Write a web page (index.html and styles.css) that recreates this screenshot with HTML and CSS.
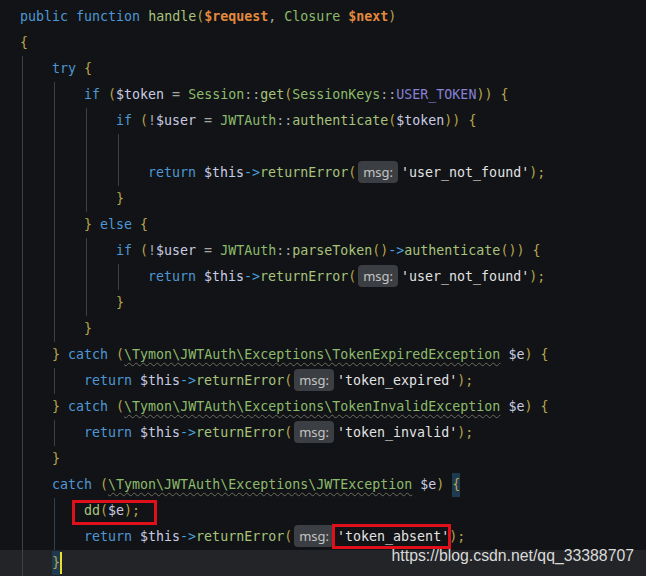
FILE: index.html
```html
<!DOCTYPE html>
<html lang="en">

<head>
  <meta charset="UTF-8">
  <meta name="viewport" content="width=device-width, initial-scale=1.0">
  <title>handle</title>
  <link rel="stylesheet" href="styles.css">
</head>

<body>
  <div class="editor">
    <div class="line"><span class="k">public</span> <span class="k">function</span> <span class="f">handle</span><span class="b">(</span><span class="p">$request</span><span class="o">, </span><span class="c">Closure</span> <span class="p">$next</span><span class="b">)</span></div>
    <div class="line"><span class="b">{</span></div>
    <div class="line"><span class="in g"></span><span class="k">try</span> <span class="b">{</span></div>
    <div class="line"><span class="in g"></span><span class="in g"></span><span class="k">if</span> <span class="b">(</span><span class="v">$token</span> <span class="o">=</span> <span class="c">Session</span><span class="o">::</span><span class="f">get</span><span class="b">(</span><span class="c">SessionKeys</span><span class="o">::</span><span class="n">USER_TOKEN</span><span class="b">))</span> <span class="b">{</span></div>
    <div class="line"><span class="in g"></span><span class="in g"></span><span class="in g"></span><span class="k">if</span> <span class="b">(</span><span class="o">!</span><span class="v">$user</span> <span class="o">=</span> <span class="c">JWTAuth</span><span class="o">::</span><span class="f">authenticate</span><span class="b">(</span><span class="v">$token</span><span class="b">))</span> <span class="b">{</span></div>
    <div class="line"><span class="in g"></span><span class="in g"></span><span class="in g"></span><span class="in g"></span></div>
    <div class="line"><span class="in g"></span><span class="in g"></span><span class="in g"></span><span class="in g"></span><span class="k">return</span> <span class="v">$this</span><span class="a">-&gt;</span><span class="f">returnError</span><span class="b">(</span><span class="hint">msg:</span><span class="s">'user_not_found'</span><span class="b">);</span></div>
    <div class="line"><span class="in g"></span><span class="in g"></span><span class="in g"></span><span class="b">}</span></div>
    <div class="line"><span class="in g"></span><span class="in g"></span><span class="b">}</span> <span class="k">else</span> <span class="b">{</span></div>
    <div class="line"><span class="in g"></span><span class="in g"></span><span class="in g"></span><span class="k">if</span> <span class="b">(</span><span class="o">!</span><span class="v">$user</span> <span class="o">=</span> <span class="c">JWTAuth</span><span class="o">::</span><span class="f">parseToken</span><span class="b">()</span><span class="a">-&gt;</span><span class="f">authenticate</span><span class="b">())</span> <span class="b">{</span></div>
    <div class="line"><span class="in g"></span><span class="in g"></span><span class="in g"></span><span class="in g"></span><span class="k">return</span> <span class="v">$this</span><span class="a">-&gt;</span><span class="f">returnError</span><span class="b">(</span><span class="hint">msg:</span><span class="s">'user_not_found'</span><span class="b">);</span></div>
    <div class="line"><span class="in g"></span><span class="in g"></span><span class="in g"></span><span class="b">}</span></div>
    <div class="line"><span class="in g"></span><span class="in g"></span><span class="b">}</span></div>
    <div class="line"><span class="in g"></span><span class="b">}</span> <span class="k">catch</span> <span class="b">(</span><span class="c wavy">\Tymon\JWTAuth\Exceptions\TokenExpiredException</span> <span class="v">$e</span><span class="b">)</span> <span class="b">{</span></div>
    <div class="line"><span class="in g"></span><span class="in g"></span><span class="k">return</span> <span class="v">$this</span><span class="a">-&gt;</span><span class="f">returnError</span><span class="b">(</span><span class="hint">msg:</span><span class="s">'token_expired'</span><span class="b">);</span></div>
    <div class="line"><span class="in g"></span><span class="b">}</span> <span class="k">catch</span> <span class="b">(</span><span class="c wavy">\Tymon\JWTAuth\Exceptions\TokenInvalidException</span> <span class="v">$e</span><span class="b">)</span> <span class="b">{</span></div>
    <div class="line"><span class="in g"></span><span class="in g"></span><span class="k">return</span> <span class="v">$this</span><span class="a">-&gt;</span><span class="f">returnError</span><span class="b">(</span><span class="hint">msg:</span><span class="s">'token_invalid'</span><span class="b">);</span></div>
    <div class="line"><span class="in g"></span><span class="b">}</span></div>
    <div class="line"><span class="in g"></span><span class="k">catch</span> <span class="b">(</span><span class="c wavy">\Tymon\JWTAuth\Exceptions\JWTException</span> <span class="v">$e</span><span class="b">)</span> <span class="b match">{</span></div>
    <div class="line"><span class="in g"></span><span class="in ga"></span><span class="mark mark-dd"><span class="f">dd</span><span class="b">(</span><span class="v">$e</span><span class="b">);</span></span></div>
    <div class="line"><span class="in g"></span><span class="in ga"></span><span class="k">return</span> <span class="v">$this</span><span class="a">-&gt;</span><span class="f">returnError</span><span class="b">(</span><span class="hint">msg:</span><span class="mark mark-str"><span class="s">'token_absent'</span></span><span class="b">);</span></div>
    <div class="line current"><span class="in g"></span><span class="b match">}</span><span class="cursor"></span></div>

    <div class="watermark">https://blog.csdn.net/qq_33388707</div>
  </div>
</body>

</html>
```

FILE: styles.css
```css
body {
  margin: 0;
  background-color: #111316;
}

.editor {
  position: relative;
  width: 646px;
  height: 576px;
  overflow: hidden;
  padding-top: 4px;
  box-sizing: border-box;
  background-color: #111316;
  color: #b4b4b4;
  font-family: "DejaVu Sans Mono", monospace;
  font-size: 13.3px;
}

.line {
  height: 26px;
  line-height: 26px;
  padding-left: 20px;
  white-space: pre;
}

.line.current {
  background-color: #222427;
}

/* indent guides */
.in {
  display: inline-block;
  width: 32px;
  height: 26px;
  vertical-align: top;
}

.in.g {
  background: linear-gradient(#3e4043, #3e4043) 2px 0 / 1px 100% no-repeat;
}

.in.ga {
  background: linear-gradient(#2c4256, #2c4256) 2px 0 / 1px 100% no-repeat;
}

/* syntax colours */
.k {
  color: #4e97d4;
}

.f {
  color: #a8c47c;
}

.c {
  color: #8dbb6c;
}

.v {
  color: #c9cbe2;
}

.p {
  color: #e2893d;
  font-weight: bold;
}

.b {
  color: #b6a54c;
}

.o {
  color: #a6a6a6;
}

.a {
  color: #4aa3de;
}

.s {
  color: #e2e2e2;
}

.n {
  color: #8880d6;
}

.wavy {
  text-decoration: underline wavy #6c6c5e;
  text-decoration-thickness: 1px;
  text-underline-offset: 3px;
}

.match {
  display: inline-block;
  height: 24px;
  line-height: 24px;
  margin-top: 1px;
  vertical-align: top;
  background-color: #1d3a50;
}

.cursor {
  display: inline-block;
  width: 2px;
  height: 22px;
  margin-top: 2px;
  vertical-align: top;
  background-color: #e8e030;
}

/* parameter hint */
.hint {
  display: inline-block;
  height: 22px;
  line-height: 22px;
  margin: 1px 3px 0 2px;
  padding: 0 5px;
  vertical-align: top;
  border-radius: 4px;
  background-color: #3b3e42;
  color: #c4c4c4;
  font-family: "Noto Sans", sans-serif;
  font-size: 13px;
}

/* red annotation boxes */
.mark {
  position: relative;
  display: inline-block;
  height: 26px;
  vertical-align: top;
}

.mark::after {
  content: "";
  position: absolute;
  border: 3px solid #e0101a;
}

.mark-dd::after {
  left: -12px;
  right: -17px;
  top: 2px;
  bottom: -1px;
}

.mark-str::after {
  left: -5px;
  right: -2px;
  top: 0;
  bottom: 1px;
}

.watermark {
  position: absolute;
  top: 546px;
  right: 12px;
  color: #dadada;
  font-family: "Liberation Sans", Arial, sans-serif;
  font-size: 15.8px;
  line-height: 20px;
}
```
